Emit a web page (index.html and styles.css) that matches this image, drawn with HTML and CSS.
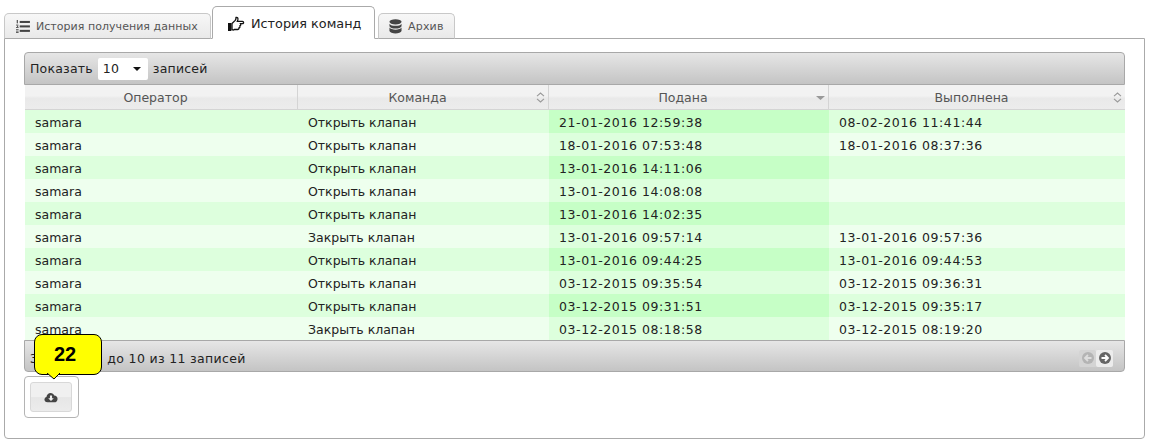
FILE: index.html
```html
<!DOCTYPE html>
<html lang="ru">
<head>
<meta charset="utf-8">
<title>История команд</title>
<link rel="stylesheet" href="styles.css">
</head>
<body>
<div class="tabs">
  <a class="tab first">
    <svg class="ic" viewBox="0 0 16 14" width="15" height="13"><g fill="#444"><rect x="5" y="1" width="11" height="2.2"/><rect x="5" y="5.800" width="11" height="2.200"/><rect x="5" y="10.600" width="11" height="2.200"/><rect x="1.800" y="0" width="1.200" height="3.600"/><rect x="1" y="5" width="2.600" height=".9"/><rect x="1" y="7.600" width="2.800" height=".9"/><rect x="2.200" y="6" width="1.100" height="1.600"/><rect x="1" y="10" width="2.800" height=".9"/><rect x="1" y="11.600" width="2.800" height=".8"/><rect x="1" y="13.100" width="2.800" height=".9"/></g></svg>
    История получения данных
  </a>
  <a class="tab active">
    <svg class="ic" viewBox="0 0 18 16" width="18" height="16"><path d="M1 7h3.400v8H1z" fill="#111"/><path d="M5 7.500 8.200 4.400c.6-.8.8-1.700.8-3 1.600-.5 2.300 1 1.800 2.600l-.5 1.400h5.200c1.400 0 1.500 2.200 0 2.200h-2c.6 1 .2 2-.6 2.200.4 1-.1 1.900-.9 2 .1 1-.5 1.700-1.400 1.700H7.400C6.200 14.500 5.600 14 5 13.500z" fill="#fff" stroke="#111" stroke-width="1.300"/></svg>
    История команд
  </a>
  <a class="tab">
    <svg class="ic" viewBox="0 0 14 16" width="13" height="15"><g fill="#444"><ellipse cx="7" cy="3" rx="6.500" ry="2.800"/><path d="M.5 5c1 1.600 3.500 2.300 6.500 2.300S12.500 6.600 13.500 5v2.600c-.6 1.600-3.300 2.500-6.500 2.500S1.100 9.200.5 7.600z"/><path d="M.5 9.200c1 1.600 3.500 2.200 6.500 2.200s5.500-.6 6.500-2.200v3.600C12.900 14.500 10.200 15.500 7 15.500S1.100 14.500.5 12.800z"/></g></svg>
    Архив
  </a>
</div>
<main class="panel">
  <div class="toolbar top">
    <label class="length">Показать <span class="select"><span class="val">10</span><i class="caret"></i></span> записей</label>
  </div>
  <table class="grid">
    <colgroup><col class="c1"><col class="c2"><col class="c3"><col class="c4"></colgroup>
    <thead>
      <tr>
        <th>Оператор</th>
        <th>Команда<svg class="sort" viewBox="0 0 9 11" width="9" height="11"><path d="M1 4.200 4.500 1 8 4.200M1 6.800 4.500 10 8 6.800" fill="none" stroke="#999" stroke-width="1.100"/></svg></th>
        <th>Подана<svg class="sort" viewBox="0 0 9 11" width="9" height="11"><path d="M0 4h9L4.500 8z" fill="#999"/></svg></th>
        <th>Выполнена<svg class="sort" viewBox="0 0 9 11" width="9" height="11"><path d="M1 4.200 4.500 1 8 4.200M1 6.800 4.500 10 8 6.800" fill="none" stroke="#999" stroke-width="1.100"/></svg></th>
      </tr>
    </thead>
    <tbody>
      <tr><td>samara</td><td>Открыть клапан</td><td>21-01-2016 12:59:38</td><td>08-02-2016 11:41:44</td></tr>
      <tr><td>samara</td><td>Открыть клапан</td><td>18-01-2016 07:53:48</td><td>18-01-2016 08:37:36</td></tr>
      <tr><td>samara</td><td>Открыть клапан</td><td>13-01-2016 14:11:06</td><td></td></tr>
      <tr><td>samara</td><td>Открыть клапан</td><td>13-01-2016 14:08:08</td><td></td></tr>
      <tr><td>samara</td><td>Открыть клапан</td><td>13-01-2016 14:02:35</td><td></td></tr>
      <tr><td>samara</td><td>Закрыть клапан</td><td>13-01-2016 09:57:14</td><td>13-01-2016 09:57:36</td></tr>
      <tr><td>samara</td><td>Открыть клапан</td><td>13-01-2016 09:44:25</td><td>13-01-2016 09:44:53</td></tr>
      <tr><td>samara</td><td>Открыть клапан</td><td>03-12-2015 09:35:54</td><td>03-12-2015 09:36:31</td></tr>
      <tr><td>samara</td><td>Открыть клапан</td><td>03-12-2015 09:31:51</td><td>03-12-2015 09:35:17</td></tr>
      <tr><td>samara</td><td>Закрыть клапан</td><td>03-12-2015 08:18:58</td><td>03-12-2015 08:19:20</td></tr>
    </tbody>
  </table>
  <div class="toolbar bottom">
    <span class="info">Записи с 1 до 10 из 11 записей</span>
    <span class="pager">
      <span class="pg off"><svg viewBox="0 0 14 14" width="14" height="14"><circle cx="7" cy="7" r="6" fill="#b4b4b4"/><path d="M10.500 7H4.500M7 4 4 7l3 3" fill="none" stroke="#ddd" stroke-width="1.800"/></svg></span>
      <span class="pg on"><svg viewBox="0 0 14 14" width="14" height="14"><circle cx="7" cy="7" r="6" fill="#666"/><path d="M3.500 7h6M7 4l3 3-3 3" fill="none" stroke="#fff" stroke-width="1.800"/></svg></span>
    </span>
  </div>
  <div class="btnbox">
    <button class="btn" type="button" aria-label="Скачать"><svg viewBox="0 0 16 12" width="14" height="11"><path d="M4 11.500C1.800 11.500.5 10 .5 8.300c0-1.500 1-2.700 2.300-3C3 3 5 .8 7.500.8c2 0 3.600 1.200 4.200 2.900 2.200 0 3.800 1.700 3.800 3.900s-1.700 3.900-3.800 3.900z" fill="#444"/><path d="M6.800 3.800h2.400v3h2L8 10 4.800 6.800h2z" fill="#eee"/></svg></button>
  </div>
  <div class="callout">22<svg class="tail" viewBox="0 0 14 7" width="14" height="7"><path d="M0 0 L7 6 L13 0" fill="#ffff00" stroke="#000" stroke-width="1"/></svg></div>
</main>
</body>
</html>
```
FILE: styles.css
```css
* { box-sizing: border-box; }
html, body { margin: 0; padding: 0; background: #fff; }
body {
  font-family: "DejaVu Sans", Verdana, sans-serif;
  font-size: 12px;
  color: #222;
  padding: 6px 5px 0 4px;
  height: 443px;
  overflow: hidden;
}
.tabs {
  display: flex;
  align-items: flex-end;
  height: 33px;
  position: relative;
  z-index: 1;
}
.tab {
  display: flex;
  align-items: center;
  gap: 6px;
  height: 26px;
  padding: 0 9px 0 10px;
  font-size: 11px;
  color: #555;
  background: linear-gradient(#f7f7f7, #e9e9e9);
  border: 1px solid #c8c8c8;
  border-bottom: 1px solid #aaa;
  border-radius: 5px 5px 0 0;
  margin-right: 2px;
}
.tab.first { width: 207px; margin-right: 1px; letter-spacing: .04px; }
.tab.active {
  width: 163px;
  height: 33px;
  padding: 2px 0 0 14px;
  font-size: 12.800px;
  color: #222;
  background: #fff;
  border-color: #aaa;
  border-bottom-color: #fff;
  gap: 6px;
  margin-right: 3px;
}
.tab:last-child { width: 77px; letter-spacing: .2px; }
.ic { flex: none; }
.panel {
  position: relative;
  height: 401px;
  margin-top: -1px;
  border: 1px solid #aaa;
  border-radius: 0 0 4px 4px;
  padding: 13px 19px 0;
}
.toolbar {
  display: flex;
  align-items: center;
  justify-content: space-between;
  width: 1101px;
  background: linear-gradient(#e6e6e6, #c4c4c4);
  border: 1px solid #a8a8a8;
  font-size: 12.500px;
  letter-spacing: .2px;
  color: #222;
}
.toolbar.top {
  height: 33px;
  border-radius: 4px 4px 0 0;
  padding-left: 5px;
}
.toolbar.bottom {
  height: 32px;
  border-radius: 0 0 4px 4px;
  padding: 4px 11px 0 5px;
}
.info { letter-spacing: .33px; }
.length { display: flex; align-items: center; }
.select {
  display: inline-flex;
  align-items: center;
  justify-content: space-between;
  width: 50px;
  height: 22px;
  margin: 0 5px;
  padding: 0 5px;
  background: #fff;
  border-radius: 2px;
}
.caret {
  width: 0;
  height: 0;
  border: 4px solid transparent;
  border-top: 4px solid #111;
  border-bottom: 0;
  margin-right: 2px;
}
.grid {
  width: 1100px;
  margin-left: 1px;
  table-layout: fixed;
  border-collapse: separate;
  border-spacing: 0;
  font-size: 12.500px;
}
.c1 { width: 273px; }
.c2 { width: 251px; }
.c3 { width: 280px; }
.c4 { width: 296px; }
.grid th {
  position: relative;
  height: 25px;
  padding: 1px 11px 0 0;
  font-weight: 400;
  color: #555;
  text-align: center;
  background: linear-gradient(#f2f2f2 0, #f2f2f2 45%, #e9e9e9 55%, #ececec 100%);
  border-right: 1px solid #d4d4d4;
  border-bottom: 1px solid #d4d4d4;
}
.grid th:last-child { border-right: 0; }
.sort { position: absolute; right: 3px; top: 7px; }
.grid td {
  height: 23px;
  padding: 2px 10px 0;
  white-space: nowrap;
  color: #222;
  background: #ddffdd;
}
.grid td:nth-child(n+3) { letter-spacing: .58px; }
.grid tbody tr:nth-child(even) td { background: #eeffee; }
.grid tbody td:nth-child(3) { background: #c6ffc6; }
.grid tbody tr:nth-child(even) td:nth-child(3) { background: #ddffdd; }
.pager {
  display: flex;
  background: rgba(255,255,255,.12);
  border-radius: 3px;
}
.pg { display: flex; align-items: center; justify-content: center; width: 17px; height: 17px; border-radius: 2px; }
.pg.on { background: #ececec; }
.pg.off { background: #d4d4d4; }
.btnbox {
  width: 55px;
  height: 42px;
  margin-top: 4px;
  padding: 5px;
  background: #fff;
  border: 1px solid #b4b4b4;
  border-radius: 4px;
}
.btn {
  display: flex;
  align-items: center;
  justify-content: center;
  width: 42px;
  height: 30px;
  padding: 0;
  background: linear-gradient(#f0f0f0 0, #f0f0f0 50%, #e6e6e6 52%, #ececec 100%);
  border: 1px solid #d8d8d8;
  border-radius: 3px;
}
.callout {
  position: absolute;
  left: 29px;
  top: 295px;
  width: 68px;
  height: 41px;
  padding: 8px 6px 0 0;
  font-family: "Liberation Sans", Arial, sans-serif;
  font-size: 20px;
  font-weight: 700;
  line-height: 22px;
  text-align: center;
  color: #000;
  background: #ffff00;
  border: 1px solid #000;
  border-radius: 8px;
  z-index: 5;
}
.tail {
  position: absolute;
  left: 12px;
  top: 38px;
  display: block;
}
```
